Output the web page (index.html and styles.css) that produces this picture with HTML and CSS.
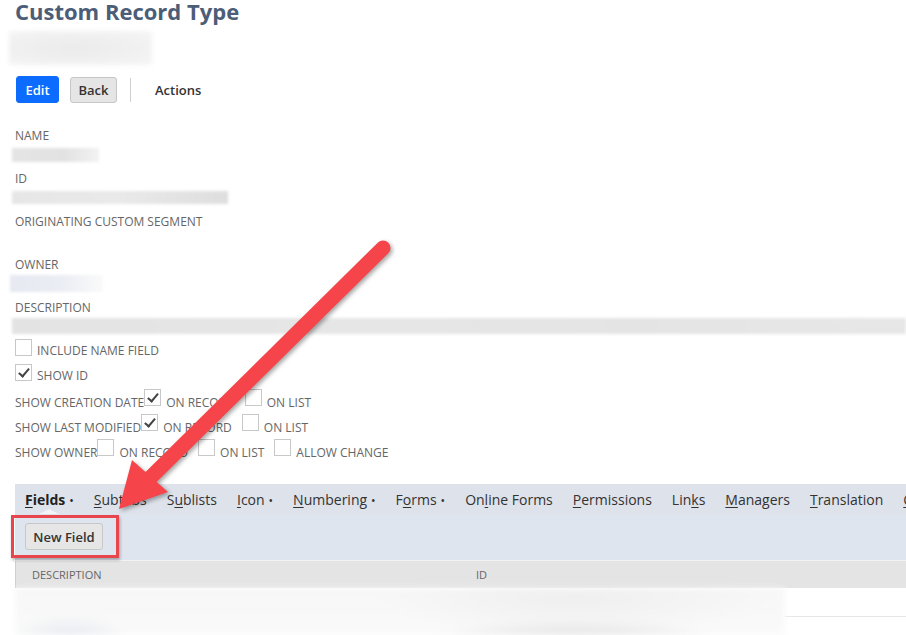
FILE: index.html
```html
<!DOCTYPE html>
<html lang="en">
<head>
<meta charset="utf-8">
<title>Custom Record Type</title>
<link rel="stylesheet" href="styles.css">
</head>
<body>
<div class="page">
  <h1 class="title">Custom Record Type</h1>
  <div class="redacted sub-title"></div>

  <div class="toolbar">
    <button class="btn btn-primary">Edit</button>
    <button class="btn btn-secondary">Back</button>
    <span class="toolbar-sep"></span>
    <span class="toolbar-menu">Actions</span>
  </div>

  <div class="fields">
    <div class="field">
      <div class="field-label">Name</div>
      <div class="redacted val-name"></div>
    </div>
    <div class="field">
      <div class="field-label">ID</div>
      <div class="redacted val-id"></div>
    </div>
    <div class="field">
      <div class="field-label">Originating Custom Segment</div>
    </div>
    <div class="field">
      <div class="field-label">Owner</div>
      <div class="redacted val-owner"></div>
    </div>
    <div class="field field-last">
      <div class="field-label">Description</div>
      <div class="redacted val-desc"></div>
    </div>
  </div>

  <div class="checks">
    <div class="check-row row-simple">
      <span class="cb"></span><span class="cb-text">Include Name Field</span>
    </div>
    <div class="check-row row-simple">
      <span class="cb checked"></span><span class="cb-text">Show ID</span>
    </div>
    <div class="check-row row-group">
      <span class="group-label">Show Creation Date</span>
      <span class="cb checked"></span><span class="cb-text">On Record</span>
      <span class="cb spaced"></span><span class="cb-text">On List</span>
    </div>
    <div class="check-row row-group">
      <span class="group-label">Show Last Modified</span>
      <span class="cb checked"></span><span class="cb-text">On Record</span>
      <span class="cb spaced"></span><span class="cb-text">On List</span>
    </div>
    <div class="check-row row-group">
      <span class="group-label">Show Owner</span>
      <span class="cb"></span><span class="cb-text">On Record</span>
      <span class="cb spaced"></span><span class="cb-text">On List</span>
      <span class="cb spaced"></span><span class="cb-text">Allow Change</span>
    </div>
  </div>

  <div class="tabs">
    <span class="tab active"><u>F</u>ields<span class="dot">•</span></span>
    <span class="tab"><u>S</u>ubtabs</span>
    <span class="tab">S<u>u</u>blists</span>
    <span class="tab"><u>I</u>con<span class="dot">•</span></span>
    <span class="tab"><u>N</u>umbering<span class="dot">•</span></span>
    <span class="tab">F<u>o</u>rms<span class="dot">•</span></span>
    <span class="tab">On<u>l</u>ine Forms</span>
    <span class="tab"><u>P</u>ermissions</span>
    <span class="tab">Lin<u>k</u>s</span>
    <span class="tab"><u>M</u>anagers</span>
    <span class="tab"><u>T</u>ranslation</span>
    <span class="tab"><u>C</u>hildren</span>
  </div>

  <div class="subtab-bar">
    <button class="btn btn-secondary btn-newfield">New Field</button>
  </div>

  <div class="list">
    <div class="list-head">
      <div class="col col-desc">Description</div>
      <div class="col col-id">ID</div>
    </div>
    <div class="list-body">
      <div class="blurred-rows"></div>
      <div class="empty-rows">
        <div class="empty-row"></div>
      </div>
    </div>
  </div>

  <div class="annot-box"></div>
  <svg class="annot-arrow" width="906" height="635" viewBox="0 0 906 635" xmlns="http://www.w3.org/2000/svg">
    <g class="arrow-shape">
      <line x1="383" y1="248" x2="148" y2="480" stroke="#f5454a" stroke-width="15" stroke-linecap="round"/>
      <polygon points="119,509 132,460 168,492" fill="#f5454a"/>
    </g>
  </svg>
</div>
</body>
</html>
```

FILE: styles.css
```css
html, body {
  margin: 0;
  padding: 0;
  background: #ffffff;
}

body {
  font-family: "Open Sans", "Liberation Sans", sans-serif;
  color: #333333;
  width: 906px;
  height: 635px;
  overflow: hidden;
}

.page {
  position: relative;
  padding-left: 15px;
  height: 635px;
  overflow: hidden;
}

.title {
  margin: 0;
  font-size: 22px;
  line-height: 22px;
  font-weight: 700;
  color: #4c5d77;
}

.redacted {
  background: #ececec;
  filter: blur(1.5px);
}

.sub-title {
  margin-top: 9px;
  margin-left: -6px;
  width: 143px;
  height: 34px;
  background: radial-gradient(ellipse at 45% 50%, #ebebeb 0%, #f1f1f1 60%, #f6f6f6 100%);
  filter: blur(2px);
}

.toolbar {
  display: flex;
  align-items: center;
  margin-top: 11px;
  height: 27px;
}

.btn {
  font-family: "Open Sans", "Liberation Sans", sans-serif;
  font-size: 13px;
  font-weight: 600;
  border-radius: 3px;
  padding: 0;
  cursor: pointer;
}

.btn-primary {
  width: 43px;
  height: 27px;
  margin-left: 1px;
  background: #0b6cff;
  color: #ffffff;
  border: 1px solid #0b6cff;
}

.btn-secondary {
  background: #e5e5e5;
  color: #333333;
  border: 1px solid #c6c6c6;
}

.toolbar .btn-secondary {
  width: 47px;
  height: 26px;
  margin-left: 11px;
}

.toolbar-sep {
  width: 1px;
  height: 24px;
  background: #cfcfcf;
  margin-left: 13px;
}

.toolbar-menu {
  margin-left: 24px;
  font-size: 13px;
  font-weight: 600;
  color: #333333;
}

.fields {
  margin-top: 25px;
}

.field {
  height: 43px;
}

.field-last {
  height: 39px;
}

.field-label {
  font-size: 12px;
  line-height: 16px;
  text-transform: uppercase;
  color: #666666;
}

.val-name {
  margin-top: 4px;
  margin-left: -3px;
  width: 87px;
  height: 14px;
  background: linear-gradient(90deg, #e4e4e4 0%, #e2e2e2 60%, #f2f2f2 100%);
}

.val-id {
  margin-top: 4px;
  margin-left: -3px;
  width: 216px;
  height: 13px;
  background: linear-gradient(90deg, #e6e6e6 0%, #e9e9e9 50%, #dedede 100%);
}

.val-owner {
  margin-top: 2px;
  margin-left: -5px;
  width: 93px;
  height: 17px;
  background: linear-gradient(90deg, #e6e9f1 0%, #eaedf3 55%, #fafafa 100%);
}

.val-desc {
  margin-top: 2px;
  margin-left: -3px;
  height: 16px;
  background: linear-gradient(90deg, #e3e3e3 0%, #e6e6e6 40%, #e4e4e4 70%, #e7e7e7 100%);
}

.checks {
  margin-top: 0;
}

.check-row {
  display: flex;
  align-items: flex-end;
  font-size: 12px;
  line-height: 16px;
  color: #666666;
  text-transform: uppercase;
  white-space: nowrap;
}

.row-simple + .row-simple {
  margin-top: 5px;
}

.row-group {
  margin-top: 3px;
}

.row-simple + .row-group {
  margin-top: 5px;
}

.cb {
  position: relative;
  box-sizing: border-box;
  width: 17px;
  height: 17px;
  border: 1px solid #c8c8c8;
  background: #ffffff;
  flex: none;
}

.row-simple .cb {
  margin-bottom: 3px;
}

.row-group .cb {
  margin-bottom: 5px;
}

.cb.checked::after {
  content: "";
  position: absolute;
  left: 5px;
  top: 1px;
  width: 4px;
  height: 9px;
  border-right: 2.5px solid #444444;
  border-bottom: 2.5px solid #444444;
  transform: rotate(40deg);
}

.cb-text {
  margin-left: 5px;
}

.cb.spaced {
  margin-left: 10px;
}

.group-label {
  margin-right: 0;
}

.tabs {
  display: flex;
  margin-top: 23px;
  height: 30px;
  box-sizing: border-box;
  padding-left: 10px;
  padding-top: 2px;
  gap: 20px;
  background: #dee2ea;
  white-space: nowrap;
  overflow: hidden;
  font-size: 14px;
  line-height: 28px;
  color: #333333;
}

.tab {
  position: relative;
}

.tab u {
  text-decoration-thickness: 1px;
  text-underline-offset: 2px;
}

.tab.active {
  font-weight: 700;
  color: #222222;
}

.tab.active::after {
  content: "";
  position: absolute;
  left: 14px;
  bottom: 0;
  width: 0;
  height: 0;
  border-left: 10px solid transparent;
  border-right: 10px solid transparent;
  border-bottom: 5px solid #f2f4f8;
}

.dot {
  font-size: 12px;
  margin-left: 4px;
  font-weight: 400;
}

.subtab-bar {
  height: 46px;
  box-sizing: border-box;
  padding: 9px 10px;
  background: #dee5ef;
}

.btn-newfield {
  height: 27px;
  width: 78px;
  background: #e6e6e6;
  border: 1px solid #c8c8c8;
}

.list {
  border-top: 1px solid #f3f3f3;
}

.list-head {
  display: flex;
  height: 27px;
  background: #e4e4e4;
  border-left: 1px solid #cfcfcf;
  font-size: 11px;
  line-height: 28px;
  color: #666666;
  text-transform: uppercase;
}

.col-desc {
  width: 444px;
  padding-left: 16px;
}

.col-id {
  padding-left: 0;
}

.list-body {
  display: flex;
  height: 47px;
}

.blurred-rows {
  width: 770px;
  height: 100%;
  background:
    radial-gradient(ellipse 60px 26px at 55px 52px, #e3e7ef 0%, rgba(244,245,248,0) 100%),
    radial-gradient(ellipse 150px 24px at 560px 54px, #dedede 0%, rgba(240,240,240,0) 100%),
    radial-gradient(ellipse 200px 40px at 560px 10px, #efefef 0%, rgba(246,246,246,0) 100%),
    linear-gradient(180deg, #f7f7f7 0%, #fafafa 100%);
  filter: blur(3px);
}

.empty-rows {
  flex: 1;
}

.empty-row {
  height: 28px;
  border-bottom: 1px solid #e6e6e6;
}

.annot-box {
  position: absolute;
  left: 11px;
  top: 515px;
  width: 108px;
  height: 43px;
  box-sizing: border-box;
  border: 3px solid #e8454c;
  box-shadow: 1px 2px 3px rgba(0, 0, 0, 0.3);
  pointer-events: none;
}

.annot-arrow {
  position: absolute;
  left: 0;
  top: 0;
  pointer-events: none;
}

.arrow-shape {
  filter: drop-shadow(2px 2px 2px rgba(0, 0, 0, 0.35));
}
```
